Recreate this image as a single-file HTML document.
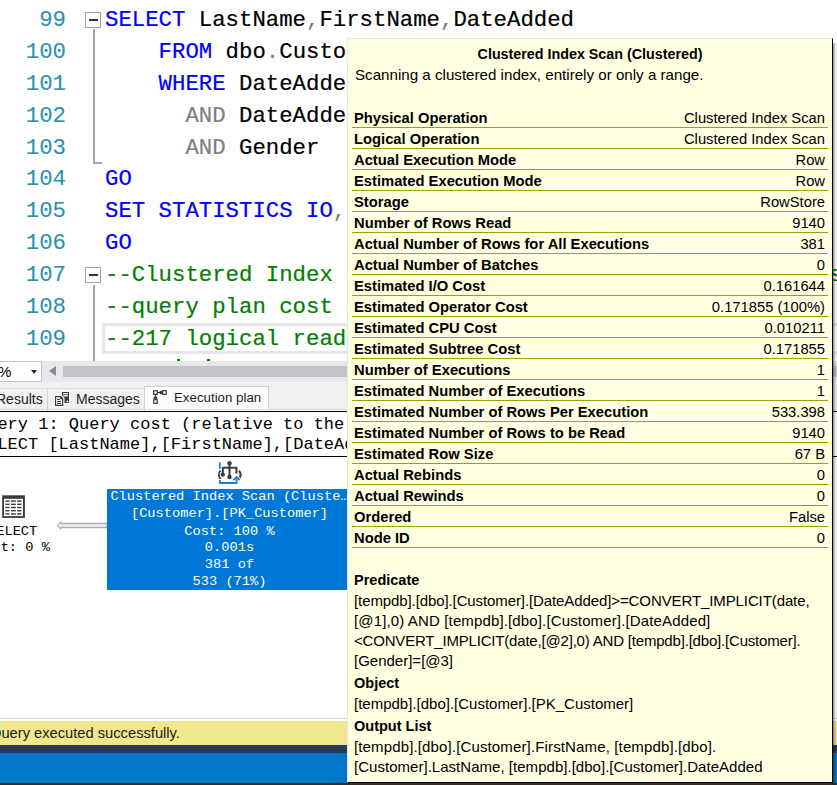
<!DOCTYPE html>
<html><head><meta charset="utf-8">
<style>
*{margin:0;padding:0;box-sizing:border-box}
html,body{width:837px;height:785px;overflow:hidden;background:#fff;position:relative}
.abs{position:absolute}
#editor{position:absolute;left:0;top:0;width:837px;height:361px;background:#fff;overflow:hidden}
.ln{position:absolute;left:0;width:66px;text-align:right;font-family:"Liberation Mono",monospace;font-size:22.33px;color:#2b91af;white-space:pre;-webkit-text-stroke:0.1px currentColor}
.cl{position:absolute;left:105px;font-family:"Liberation Mono",monospace;font-size:22.33px;color:#000;white-space:pre;-webkit-text-stroke:0.2px currentColor}
.kw{color:#0000ff}
.gr{color:#808080}
.cm{color:#008000}
.fold{position:absolute;left:85px;width:16px;height:16px;border:1.5px solid #a5a5a5;background:#fff}
.fold:after{content:"";position:absolute;left:3px;top:6px;width:9px;height:2px;background:#333}
.vl{position:absolute;left:93px;width:2px;background:#a5a5a5}
#curline{position:absolute;left:102px;top:323px;width:760px;height:31px;border:3px solid #e6e6ea;border-right:none}
/* scrollbar row */
#hscroll{position:absolute;left:0;top:361px;width:837px;height:21px;background:#e8e8ec}
#zoom{position:absolute;left:-2px;top:361px;width:44px;height:21px;background:#fff;border:1px solid #bac6dd;z-index:2}
#thumb{position:absolute;left:63px;top:366px;width:774px;height:11px;background:#c2c3c9}
/* tabs */
#tabs{position:absolute;left:0;top:382px;width:837px;height:28px;background:#f0f0f0;border-bottom:1px solid #d8d8d8}
.tab{position:absolute;top:4px;height:25px;font-family:"Liberation Sans",sans-serif;font-size:14px;color:#1e1e1e;white-space:pre;line-height:25px}
#plantop{position:absolute;left:0;top:411px;width:837px;height:1px;background:#000}
#planbot{position:absolute;left:0;top:456px;width:837px;height:1px;background:#000}
.q{position:absolute;left:-23px;font-family:"Liberation Mono",monospace;font-size:17px;color:#000;white-space:pre}
#node{position:absolute;left:107px;top:489px;width:245px;height:101px;background:#0078d7}
.nt{position:absolute;left:0;width:245px;text-align:center;font-family:"Liberation Mono",monospace;font-size:13.7px;color:#fff;white-space:pre}
#status{position:absolute;left:0;top:721px;width:837px;height:24px;background:#f0e68c}
#navy{position:absolute;left:0;top:745px;width:837px;height:8px;background:#293956}
#bluebar{position:absolute;left:0;top:753px;width:837px;height:30px;background:#0077c9}
#botbar{position:absolute;left:0;top:783px;width:837px;height:2px;background:#3a2d27}
/* tooltip */
#tip{position:absolute;left:347px;top:38px;width:486px;height:745px;background:#ffffe1;border-top:1px solid #e6e6e6;border-left:1px solid #e6e6e6;border-right:1px solid #000;border-bottom:1px solid #000;font-family:"Liberation Sans",sans-serif;color:#000}
#tip .title{position:absolute;left:0;width:484px;text-align:center;top:7px;font-weight:bold;font-size:14.3px}
#tip .sub{position:absolute;left:7px;top:27px;font-size:15.15px}
.row{position:absolute;left:4px;width:476px;height:21px;border-bottom:1px solid #a0a000;font-size:14.75px;line-height:20px}
.row b{position:absolute;left:2px;top:1px}
.row span{position:absolute;right:3px;top:1px}
.sec{position:absolute;left:6px;font-weight:bold;font-size:14.5px}
.body{position:absolute;left:6px;font-size:15px;line-height:20px;white-space:pre}
</style></head>
<body>
<div id="editor">
  <div class="ln" style="top:7px">99</div>
  <div class="ln" style="top:39px">100</div>
  <div class="ln" style="top:71px">101</div>
  <div class="ln" style="top:103px">102</div>
  <div class="ln" style="top:135px">103</div>
  <div class="ln" style="top:166px">104</div>
  <div class="ln" style="top:198px">105</div>
  <div class="ln" style="top:230px">106</div>
  <div class="ln" style="top:262px">107</div>
  <div class="ln" style="top:294px">108</div>
  <div class="ln" style="top:326px">109</div>
  <div id="curline"></div>
  <div class="cl" style="top:7px"><span class="kw">SELECT</span> LastName<span class="gr">,</span>FirstName<span class="gr">,</span>DateAdded</div>
  <div class="cl" style="top:39px">    <span class="kw">FROM</span> dbo<span class="gr">.</span>Customer</div>
  <div class="cl" style="top:71px">    <span class="kw">WHERE</span> DateAdded <span class="gr">&gt;=</span></div>
  <div class="cl" style="top:103px">      <span class="gr">AND</span> DateAdded <span class="gr">&lt;</span></div>
  <div class="cl" style="top:135px">      <span class="gr">AND</span> Gender</div>
  <div class="cl" style="top:166px"><span class="kw">GO</span></div>
  <div class="cl" style="top:198px"><span class="kw">SET STATISTICS IO</span><span class="gr">,</span> <span class="kw">TIME OFF</span></div>
  <div class="cl" style="top:230px"><span class="kw">GO</span></div>
  <div class="cl cm" style="top:262px">--Clustered Index Scan with predicate pushdown residues</div>
  <div class="cl cm" style="top:294px">--query plan cost 0.17</div>
  <div class="cl cm" style="top:326px">--217 logical reads</div>
  <div class="abs" style="left:177px;top:359px;width:3px;height:2px;background:#008000"></div><div class="abs" style="left:207px;top:359px;width:3px;height:2px;background:#008000"></div>
  <div class="fold" style="top:12px"></div>
  <div class="vl" style="top:29px;height:135px"></div>
  <div class="abs" style="left:93px;top:162px;width:9px;height:2px;background:#a5a5a5"></div>
  <div class="fold" style="top:267px"></div>
  <div class="vl" style="top:285px;height:76px"></div>
</div>
<div id="hscroll"></div>
<div id="zoom"><span class="abs" style="left:-1px;top:1px;font-family:'Liberation Sans';font-size:15px">%</span><span class="abs" style="left:32px;top:8px;width:0;height:0;border-left:3.6px solid transparent;border-right:3.6px solid transparent;border-top:4px solid #1b2540"></span></div>
<div class="abs" style="left:49px;top:366px;width:0;height:0;border-top:5.5px solid transparent;border-bottom:5.5px solid transparent;border-right:7px solid #868999"></div>
<div id="thumb"></div>
<div id="tabs">
  <div class="abs" style="left:-10px;top:6px;width:58px;height:23px;border:1px solid #dcdce2;border-bottom:none"></div>
  <div class="tab" style="left:-4px;top:5px">Results</div>
  <div class="abs" style="left:47px;top:6px;width:98px;height:23px;border:1px solid #dcdce2;border-bottom:none;border-left-color:#d0d0d6"></div>
  <svg class="abs" style="left:52px;top:7px" width="20" height="20" viewBox="52 389 20 20">
    <rect x="61" y="391" width="9" height="13" fill="#fff" opacity="0.8"/>
    <rect x="62" y="392" width="7" height="11" fill="#383838"/>
    <rect x="63.1" y="393.1" width="4.8" height="1.3" fill="#fff"/><rect x="63.1" y="395.2" width="4.8" height="1.3" fill="#fff"/>
    <circle cx="67.3" cy="401.4" r="0.9" fill="#fff"/>
    <path d="M54 395 H61.4 L64.5 398.1 V407 H54 Z" fill="#fff"/>
    <path d="M55 396 H61 L63.3 398.3 V406 H55 Z" fill="#383838"/>
    <path d="M56.2 397.2 H60.2 V399.2 H62.1 V404.8 H56.2 Z" fill="#fff"/>
    <rect x="57.1" y="398.9" width="2.7" height="1.1" fill="#383838"/><rect x="57.1" y="400.9" width="3.9" height="1.1" fill="#383838"/><rect x="57.1" y="402.9" width="3.9" height="1.1" fill="#383838"/>
  </svg>
  <div class="tab" style="left:76px;top:5px">Messages</div>
  <div class="abs" style="left:144px;top:4px;width:125px;height:23px;background:#fcfcfc;border:1px solid #cfcfd6;border-bottom:none"></div>
  <svg class="abs" style="left:150px;top:5px" width="20" height="20" viewBox="0 0 20 20">
    <g fill="none" stroke="#333" stroke-width="1.15">
      <rect x="3.7" y="3.7" width="3.6" height="3.6"/>
      <rect x="12.7" y="3.7" width="3.6" height="3.6"/>
      <rect x="3.7" y="12.7" width="3.6" height="3.6"/>
      <path d="M7.5 5.5 H12.3 M5.5 7.5 V12.3"/>
    </g>
    <path d="M8.7 5.5 Q10.2 3.3 11.8 3.4 V7.6 Q10.2 7.7 8.7 5.5 Z M5.5 8.7 Q3.3 10.2 3.4 11.8 H7.6 Q7.7 10.2 5.5 8.7 Z" fill="#333"/>
  </svg>
  <div class="tab" style="left:174px;top:3px;font-size:13.3px">Execution plan</div>
</div>
<div id="plantop"></div>
<div class="q" style="top:415px">Query 1: Query cost (relative to the batch): 100%</div>
<div class="q" style="top:435px">SELECT [LastName],[FirstName],[DateAdded] FROM [dbo].[Customer]</div>
<div id="planbot"></div>
<svg class="abs" style="left:0;top:490px" width="30" height="32" viewBox="0 490 30 32">
  <rect x="2.2" y="495.3" width="22.7" height="22.6" fill="#3a3a3a"/>
  <rect x="4" y="498.8" width="19" height="17.3" fill="#fff"/>
  <g fill="#3a3a3a">
    <rect x="5.4" y="500.4" width="4.2" height="1.4"/><rect x="11" y="500.4" width="4.9" height="1.4"/><rect x="17.1" y="500.4" width="4.4" height="1.4"/>
    <rect x="5.4" y="503.6" width="4.2" height="1.4"/><rect x="11" y="503.6" width="4.9" height="1.4"/><rect x="17.1" y="503.6" width="4.4" height="1.4"/>
    <rect x="5.4" y="506.8" width="4.2" height="1.4"/><rect x="11" y="506.8" width="4.9" height="1.4"/><rect x="17.1" y="506.8" width="4.4" height="1.4"/>
    <rect x="5.4" y="510" width="4.2" height="1.4"/><rect x="11" y="510" width="4.9" height="1.4"/><rect x="17.1" y="510" width="4.4" height="1.4"/>
    <rect x="5.4" y="513.2" width="4.2" height="1.4"/><rect x="11" y="513.2" width="4.9" height="1.4"/><rect x="17.1" y="513.2" width="4.4" height="1.4"/>
  </g>
</svg>
<svg class="abs" style="left:50px;top:515px" width="60" height="20" viewBox="50 515 60 20">
  <path d="M57 525.4 L60.7 521.8 V523.3 H107 V527.7 H60.7 V529.1 Z" fill="#e8e8ec" stroke="#9a9a9a" stroke-width="1"/>
</svg>
<svg class="abs" style="left:205px;top:455px" width="50" height="35" viewBox="205 455 50 35">
  <g stroke="#3c3c3c" stroke-width="2.1" fill="none">
    <path d="M220.6 470.6 Q217.4 474.7 220.6 478.8"/>
    <path d="M239 470.6 Q242.2 474.7 239 478.8"/>
  </g>
  <g stroke="#fff" stroke-width="3.6" fill="none"><path d="M222.8 474.5 V467.8 H236.4 V473.5"/></g>
  <g fill="#fff"><circle cx="222.8" cy="474.6" r="3.2"/></g>
  <g stroke="#3c3c3c" stroke-width="2" fill="none">
    <path d="M229.5 463 V477 M222.8 474.5 V467.8 H236.4 V473.5"/>
  </g>
  <g fill="#3c3c3c"><circle cx="229.5" cy="463.2" r="2.2"/><circle cx="229.5" cy="477" r="2.2"/><circle cx="222.8" cy="474.6" r="2.2"/></g>
  <g stroke="#fff" stroke-width="3.5" fill="none"><path d="M233.2 480.4 L236.6 477 L240 480.4"/></g>
  <g stroke="#1e7fd6" stroke-width="1.8" fill="none">
    <path d="M219.8 462.2 V468.8"/>
    <path d="M219.8 480 V483 H236.6 V477.5"/>
    <path d="M233.4 480.2 L236.6 477 L239.8 480.2"/>
  </g>
</svg>
<div class="abs" style="left:-12px;top:524px;width:50px;font-family:'Liberation Mono',monospace;font-size:13.7px;color:#000;white-space:pre">SELECT</div>
<div class="abs" style="left:-24px;top:540px;width:80px;font-family:'Liberation Mono',monospace;font-size:13.7px;color:#000;white-space:pre">Cost: 0 %</div>
<div id="node">
  <div class="nt" style="top:0px">Clustered Index Scan (Cluste…</div>
  <div class="nt" style="top:17px">[Customer].[PK_Customer]</div>
  <div class="nt" style="top:35px">Cost: 100 %</div>
  <div class="nt" style="top:51px">0.001s</div>
  <div class="nt" style="top:68px">381 of</div>
  <div class="nt" style="top:85px">533 (71%)</div>
</div>
<div class="abs" style="left:0;top:718px;width:837px;height:1px;background:#d6d6d6"></div>
<div id="status"><span class="abs" style="left:-10px;top:4px;font-family:'Liberation Sans';font-size:14.7px;color:#1e1e1e">Query executed successfully.</span></div>
<div id="navy"></div>
<div id="bluebar"></div>
<div id="botbar"></div>

<div class="abs" style="left:833px;top:43px;width:4px;height:742px;background:linear-gradient(to right,rgba(0,0,0,0.42),rgba(0,0,0,0.12) 60%,rgba(0,0,0,0))"></div>
<div id="tip">
  <div class="title">Clustered Index Scan (Clustered)</div>
  <div class="sub">Scanning a clustered index, entirely or only a range.</div>
  <div class="row" style="top:68px"><b>Physical Operation</b><span>Clustered Index Scan</span></div>
  <div class="row" style="top:89px"><b>Logical Operation</b><span>Clustered Index Scan</span></div>
  <div class="row" style="top:110px"><b>Actual Execution Mode</b><span>Row</span></div>
  <div class="row" style="top:131px"><b>Estimated Execution Mode</b><span>Row</span></div>
  <div class="row" style="top:152px"><b>Storage</b><span>RowStore</span></div>
  <div class="row" style="top:173px"><b>Number of Rows Read</b><span>9140</span></div>
  <div class="row" style="top:194px"><b>Actual Number of Rows for All Executions</b><span>381</span></div>
  <div class="row" style="top:215px"><b>Actual Number of Batches</b><span>0</span></div>
  <div class="row" style="top:236px"><b>Estimated I/O Cost</b><span>0.161644</span></div>
  <div class="row" style="top:257px"><b>Estimated Operator Cost</b><span>0.171855 (100%)</span></div>
  <div class="row" style="top:278px"><b>Estimated CPU Cost</b><span>0.010211</span></div>
  <div class="row" style="top:299px"><b>Estimated Subtree Cost</b><span>0.171855</span></div>
  <div class="row" style="top:320px"><b>Number of Executions</b><span>1</span></div>
  <div class="row" style="top:341px"><b>Estimated Number of Executions</b><span>1</span></div>
  <div class="row" style="top:362px"><b>Estimated Number of Rows Per Execution</b><span>533.398</span></div>
  <div class="row" style="top:383px"><b>Estimated Number of Rows to be Read</b><span>9140</span></div>
  <div class="row" style="top:404px"><b>Estimated Row Size</b><span>67 B</span></div>
  <div class="row" style="top:425px"><b>Actual Rebinds</b><span>0</span></div>
  <div class="row" style="top:446px"><b>Actual Rewinds</b><span>0</span></div>
  <div class="row" style="top:467px"><b>Ordered</b><span>False</span></div>
  <div class="row" style="top:488px"><b>Node ID</b><span>0</span></div>
  <div class="sec" style="top:533px">Predicate</div>
  <div class="body" style="top:552px;letter-spacing:-0.1px">[tempdb].[dbo].[Customer].[DateAdded]&gt;=CONVERT_IMPLICIT(date,</div>
  <div class="body" style="top:572px;letter-spacing:0.14px">[@1],0) AND [tempdb].[dbo].[Customer].[DateAdded]</div>
  <div class="body" style="top:592px;letter-spacing:-0.19px">&lt;CONVERT_IMPLICIT(date,[@2],0) AND [tempdb].[dbo].[Customer].</div>
  <div class="body" style="top:612px">[Gender]=[@3]</div>
  <div class="sec" style="top:636px">Object</div>
  <div class="body" style="top:655px">[tempdb].[dbo].[Customer].[PK_Customer]</div>
  <div class="sec" style="top:679px">Output List</div>
  <div class="body" style="top:698px;letter-spacing:0.14px">[tempdb].[dbo].[Customer].FirstName, [tempdb].[dbo].</div>
  <div class="body" style="top:718px;letter-spacing:0.03px">[Customer].LastName, [tempdb].[dbo].[Customer].DateAdded</div>
</div>
</body></html>
